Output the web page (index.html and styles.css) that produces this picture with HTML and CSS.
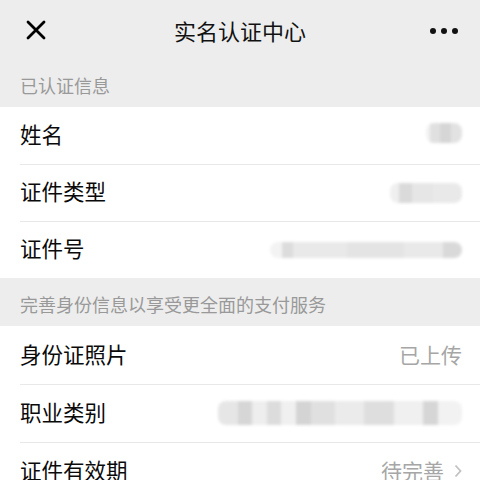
FILE: index.html
```html
<!DOCTYPE html>
<html lang="zh">
<head>
<meta charset="utf-8">
<link rel="stylesheet" href="styles.css">
</head>
<body>
<div class="page">
  <header class="nav">
    <svg class="close" viewBox="0 0 20 20" width="20" height="20"><path d="M2 2 L18 18 M18 2 L2 18" stroke="#000" stroke-width="2.8" stroke-linecap="round"/></svg>
    <div class="title">实名认证中心</div>
    <div class="more"><span></span><span></span><span></span></div>
  </header>

  <div class="section-title s1">已认证信息</div>
  <div class="group">
    <div class="row"><span class="label">姓名</span><span class="blur b-name"></span></div>
    <div class="row"><span class="label">证件类型</span><span class="blur b-type"></span></div>
    <div class="row"><span class="label">证件号</span><span class="blur b-id"></span></div>
  </div>

  <div class="section-title s2">完善身份信息以享受更全面的支付服务</div>
  <div class="group g2">
    <div class="row"><span class="label">身份证照片</span><span class="value">已上传</span></div>
    <div class="row"><span class="label">职业类别</span><span class="blur b-job"></span></div>
    <div class="row"><span class="label">证件有效期</span><span class="value">待完善<svg class="chev" viewBox="0 0 8 14" width="8" height="14"><path d="M1.5 1.5 L6.5 7 L1.5 12.5" fill="none" stroke="#c2c2c2" stroke-width="1.8"/></svg></span></div>
  </div>
</div>
</body>
</html>
```

FILE: styles.css
```css
* { box-sizing: border-box; margin: 0; padding: 0; }
html, body { background: #ededed; }
body {
  font-family: "Noto Sans CJK SC", "Noto Sans", sans-serif;
  width: 480px;
  height: 480px;
  overflow: hidden;
}
.page { width: 480px; }
.nav {
  height: 63px;
  display: flex;
  align-items: center;
  justify-content: space-between;
  padding: 0 22px 0 26px;
  position: relative;
}
.close { display: block; margin-top: -3px; }
.title {
  position: absolute;
  left: 0; right: 0;
  text-align: center;
  font-size: 22px;
  color: #111;
  top: 15px;
  line-height: 30px;
  pointer-events: none;
}
.more { display: flex; gap: 4.5px; margin-top: -1px; }
.more span {
  width: 6.5px; height: 6.5px;
  border-radius: 50%;
  background: #111;
}
.section-title {
  font-size: 18px;
  color: #999;
  padding-left: 20px;
  display: flex;
  align-items: center;
}
.s1 { height: 44px; }
.s2 { height: 48px; padding-top: 4px; }
.group { background: #fff; }
.row {
  height: 57px;
  display: flex;
  align-items: center;
  justify-content: space-between;
  padding: 0 18px 0 20px;
  position: relative;
}
.g2 .row { height: 58px; }
.row + .row::before {
  content: "";
  position: absolute;
  left: 20px; right: 0; top: 0;
  height: 1px;
  background: #e8e8e8;
}
.label { font-size: 21.5px; color: #0a0a0a; line-height: 28px; margin-top: -3px; }
.value {
  font-size: 21px;
  color: #a6a6a6;
  display: flex;
  align-items: center;
  gap: 10px;
  line-height: 28px;
  margin-top: -3px;
}
.chev { display: block; margin-top: 2px; }
.blur {
  display: block;
  height: 20px;
  filter: blur(1.5px);
  border-radius: 8px;
}
.b-name {
  width: 36px;
  margin-top: -6px;
  background: linear-gradient(90deg, #f2f2f2 0 10%, #e0e0e0 10% 40%, #d6d6d6 40% 70%, #e2e2e2 70%);
}
.b-type {
  width: 72px;
  background: linear-gradient(90deg, #efefef 0 12%, #dadada 12% 30%, #e6e6e6 30% 60%, #e9e9e9 60%);
}
.b-id {
  width: 192px;
  height: 16px;
  background: linear-gradient(90deg, #f3f3f3 0 6%, #dcdcdc 6% 12%, #e9e9e9 12% 40%, #e4e4e4 40% 70%, #e9e9e9 70% 90%, #d9d9d9 90%);
}
.b-job {
  width: 244px;
  height: 24px;
  background: linear-gradient(90deg, #e6e6e6 0 8%, #d6d6d6 8% 14%, #eeeeee 14% 20%, #dcdcdc 20% 26%, #f0f0f0 26% 32%, #d4d4d4 32% 38%, #e0e0e0 38% 48%, #ebebeb 48% 60%, #dedede 60% 72%, #f0f0f0 72% 84%, #d6d6d6 84% 90%, #f2f2f2 90%);
}
```
